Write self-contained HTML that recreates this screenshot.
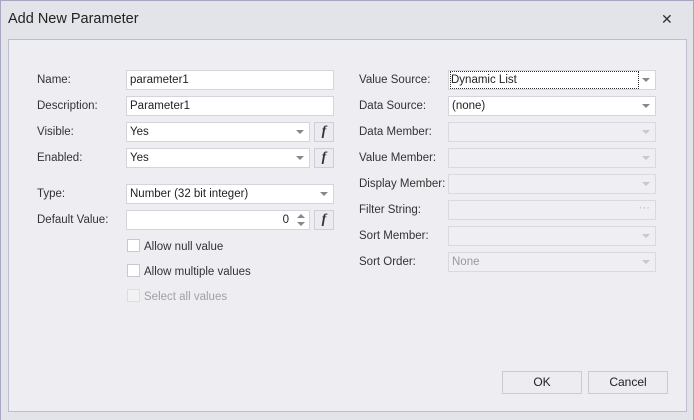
<!DOCTYPE html>
<html><head><style>
*{box-sizing:border-box;margin:0;padding:0}
body{width:694px;height:420px;overflow:hidden;background:#e3e3ea;font-family:"Liberation Sans",sans-serif;font-size:11.5px;color:#333;position:relative}
.win{position:absolute;left:0;top:0;width:694px;height:420px;border:1px solid #a6a6c0;border-bottom:none}
.title{position:absolute;left:8px;top:11px;font-size:14.5px;color:#222}
.x{position:absolute;left:661px;top:11px;font-size:14px;color:#333}
.panel{position:absolute;left:8px;top:39px;width:679px;height:373px;background:#eeedf2;border:1px solid #bdbdd0}
.lbl{position:absolute;line-height:20px}
.in{position:absolute;height:20px;background:#fff;border:1px solid #d4d4dc;line-height:18px;padding-left:3px;color:#222}
.dis{background:#efeff3;border-color:#d9d9e0;color:#999}
.arr{position:absolute;right:5px;top:7px;width:0;height:0;border-left:4px solid transparent;border-right:4px solid transparent;border-top:4px solid #888}
.dis .arr{border-top-color:#c8c8d0}
.f{position:absolute;width:20px;height:20px;border:1px solid #cfcfd8;background:#ececf0;font-family:"Liberation Serif",serif;font-style:italic;font-weight:bold;font-size:14px;text-align:center;line-height:18px;color:#333}
.cb{position:absolute;width:13px;height:13px;background:#fff;border:1px solid #c8c8d0}
.btn{position:absolute;width:80px;height:23px;border:1px solid #cacad6;background:#ececf1;text-align:center;line-height:21px;color:#222;font-size:12px}
</style></head><body>
<div class="win"></div>
<div class="title">Add New Parameter</div>
<div class="x">✕</div>
<div class="panel"></div>

<div class="lbl" style="left:37px;top:70px">Name:</div>
<div class="in" style="left:126px;top:70px;width:208px">parameter1</div>
<div class="lbl" style="left:37px;top:96px">Description:</div>
<div class="in" style="left:126px;top:96px;width:208px">Parameter1</div>
<div class="lbl" style="left:37px;top:122px">Visible:</div>
<div class="in" style="left:126px;top:122px;width:184px">Yes<div class="arr"></div></div>
<div class="f" style="left:314px;top:122px">f</div>
<div class="lbl" style="left:37px;top:148px">Enabled:</div>
<div class="in" style="left:126px;top:148px;width:184px">Yes<div class="arr"></div></div>
<div class="f" style="left:314px;top:148px">f</div>
<div class="lbl" style="left:37px;top:184px">Type:</div>
<div class="in" style="left:126px;top:184px;width:208px">Number (32 bit integer)<div class="arr"></div></div>
<div class="lbl" style="left:37px;top:210px">Default Value:</div>
<div class="in" style="left:126px;top:210px;width:184px;text-align:right;padding-right:20px">0
<div style="position:absolute;right:4px;top:3px;width:0;height:0;border-left:4px solid transparent;border-right:4px solid transparent;border-bottom:4px solid #888"></div>
<div style="position:absolute;right:4px;top:11px;width:0;height:0;border-left:4px solid transparent;border-right:4px solid transparent;border-top:4px solid #888"></div></div>
<div class="f" style="left:314px;top:210px">f</div>
<div class="cb" style="left:127px;top:239px"></div><div class="lbl" style="left:144px;top:237px">Allow null value</div>
<div class="cb" style="left:127px;top:264px"></div><div class="lbl" style="left:144px;top:262px">Allow multiple values</div>
<div class="cb" style="left:127px;top:289px;background:#f2f2f5;border-color:#dcdce2"></div><div class="lbl" style="left:144px;top:287px;color:#a0a0a8">Select all values</div>

<div class="lbl" style="left:359px;top:70px">Value Source:</div>
<div class="in" style="left:448px;top:70px;width:208px"><span style="outline:1px dotted #333;display:inline-block;width:187px;margin-left:-1px;line-height:16px">Dynamic List</span><div class="arr"></div></div>
<div class="lbl" style="left:359px;top:96px">Data Source:</div>
<div class="in" style="left:448px;top:96px;width:208px">(none)<div class="arr"></div></div>
<div class="lbl" style="left:359px;top:122px">Data Member:</div>
<div class="in dis" style="left:448px;top:122px;width:208px"><div class="arr"></div></div>
<div class="lbl" style="left:359px;top:148px">Value Member:</div>
<div class="in dis" style="left:448px;top:148px;width:208px"><div class="arr"></div></div>
<div class="lbl" style="left:359px;top:174px">Display Member:</div>
<div class="in dis" style="left:448px;top:174px;width:208px"><div class="arr"></div></div>
<div class="lbl" style="left:359px;top:200px">Filter String:</div>
<div class="in dis" style="left:448px;top:200px;width:208px"><span style="position:absolute;right:5px;top:-2px;color:#bbb">···</span></div>
<div class="lbl" style="left:359px;top:226px">Sort Member:</div>
<div class="in dis" style="left:448px;top:226px;width:208px"><div class="arr"></div></div>
<div class="lbl" style="left:359px;top:252px">Sort Order:</div>
<div class="in dis" style="left:448px;top:252px;width:208px">None<div class="arr"></div></div>

<div class="btn" style="left:502px;top:371px">OK</div>
<div class="btn" style="left:588px;top:371px">Cancel</div>
</body></html>
